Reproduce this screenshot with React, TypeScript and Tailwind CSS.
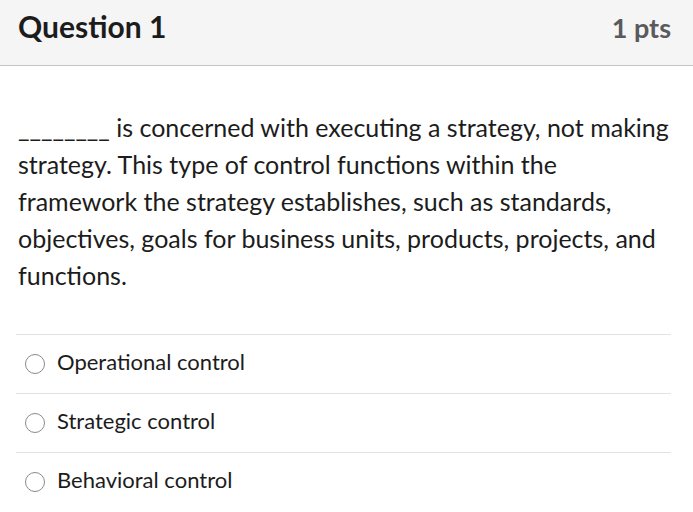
import React from "react";

const options = ["Operational control", "Strategic control", "Behavioral control"];

export default function App() {
  return (
    <div className="w-[693px] h-[512px] overflow-hidden bg-white text-[#1c1c1c]" style={{ fontFamily: "Lato, 'Noto Sans', sans-serif" }}>
      <div className="h-[66px] bg-[#f5f5f5] border-b border-[#c4c4c4] flex items-center justify-between pl-[18px] pr-[22px]">
        <div className="text-[30px] font-bold leading-none pb-[13px]">Question 1</div>
        <div className="text-[27px] font-bold leading-none text-[#5a5a5a] pb-[10px]">1 pts</div>
      </div>
      <div className="pl-[18px] pt-[43px] pr-[20px]">
        <p className="text-[25px] leading-[37px]">
          ________ is concerned with executing a strategy, not making strategy. This type of control functions within the framework the strategy establishes, such as standards, objectives, goals for business units, products, projects, and functions.
        </p>
      </div>
      <div className="mt-[40px] ml-[16px] mr-[22px]">
        {options.map((o) => (
          <div key={o} className="border-t border-[#e2e2e2] h-[59px] flex items-center gap-[12px] pl-[9px]">
            <span className="w-[20px] h-[20px] rounded-full border border-[#8a8a8a] bg-white shrink-0" />
            <span className="text-[22px] leading-none pb-[5px]">{o}</span>
          </div>
        ))}
      </div>
    </div>
  );
}
